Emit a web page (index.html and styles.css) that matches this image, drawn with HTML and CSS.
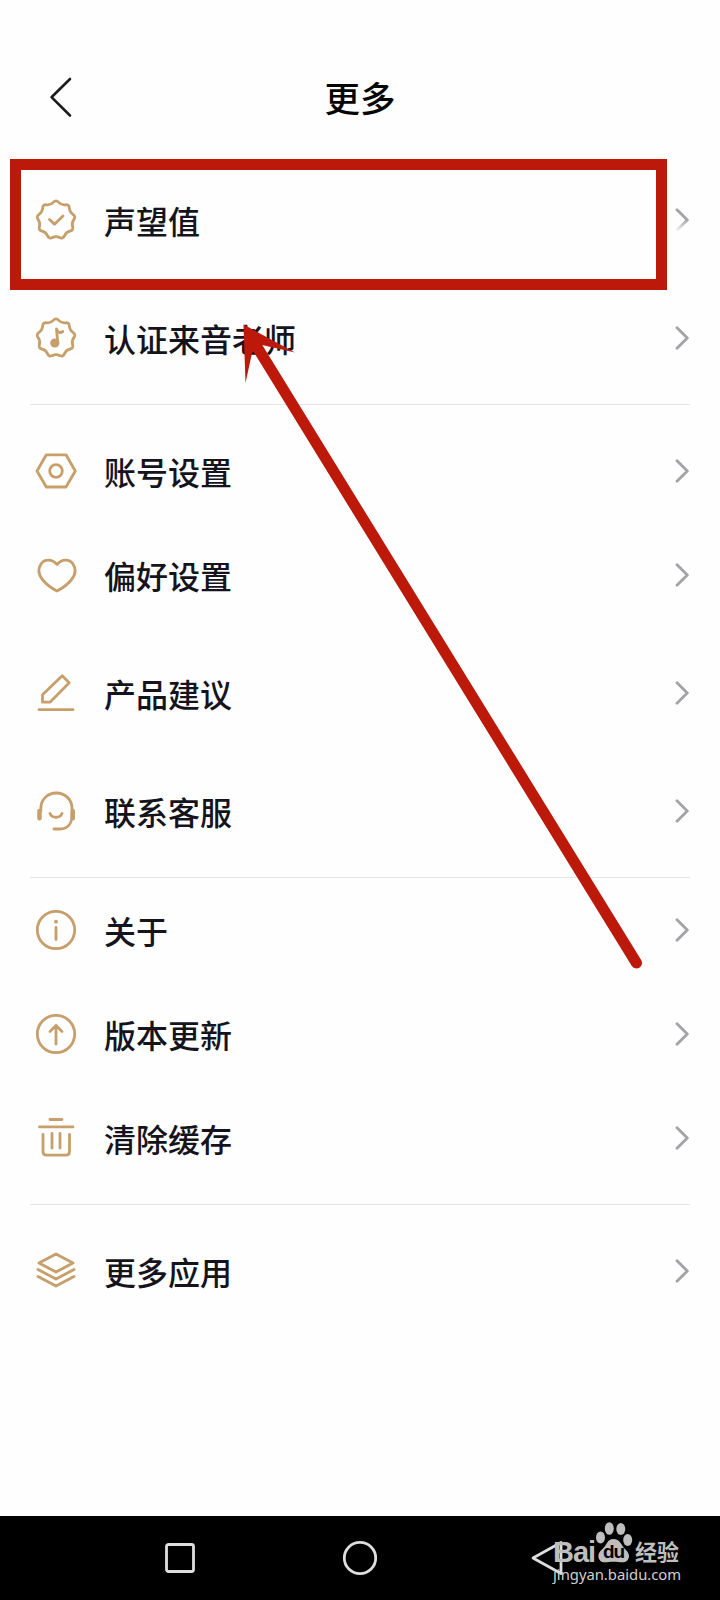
FILE: index.html
```html
<!DOCTYPE html>
<html lang="zh-CN">
<head>
<meta charset="utf-8">
<title>更多</title>
<link rel="stylesheet" href="styles.css">
</head>
<body>
<svg class="defs" width="0" height="0">
  <symbol id="badge" viewBox="0 0 44 44"><path d="M24.690 4.380Q27.370 7.250 31.280 6.780Q35.180 6.300 35.390 10.230Q35.600 14.150 38.900 16.300Q42.190 18.440 39.830 21.590Q37.460 24.730 38.610 28.490Q39.750 32.250 35.920 33.140Q32.090 34.030 30.550 37.650Q29.010 41.260 25.510 39.480Q22 37.700 18.490 39.480Q14.990 41.260 13.450 37.650Q11.910 34.030 8.080 33.140Q4.250 32.250 5.390 28.490Q6.540 24.730 4.170 21.590Q1.810 18.440 5.100 16.300Q8.400 14.150 8.610 10.230Q8.820 6.300 12.720 6.780Q16.630 7.250 19.310 4.380Q22 1.500 24.690 4.380Z"/></symbol>
  <symbol id="next" viewBox="0 0 14 24"><path d="M2 1.700L12.300 12L2 22.300"/></symbol>
</svg>
<div class="screen">
  <header class="header">
    <svg class="back" viewBox="0 0 24 42"><path d="M22 3L3.500 21.200L22 39.500"/></svg>
    <h1 class="title">更多</h1>
  </header>

  <main class="menu">
    <section class="group spaced">
      <div class="row"><svg class="icon" viewBox="0 0 44 44"><use href="#badge"/><path d="M15.500 21.500L20.500 26.300L29 18"/></svg><span class="label">声望值</span><svg class="next faded"><use href="#next"/></svg></div>
      <div class="row"><svg class="icon" viewBox="0 0 44 44"><use href="#badge"/><circle class="solid" cx="20.800" cy="27" r="4.600"/><path d="M23.800 27L22.500 13C23.500 16.500 26 17.500 28.800 15.500"/></svg><span class="label">认证来音老师</span><svg class="next"><use href="#next"/></svg></div>
    </section>
    <section class="group settings">
      <div class="row"><svg class="icon" viewBox="0 0 44 44"><path d="M12.300 5.800H32L41.300 22L32 38H12.300L3 22Z"/><circle cx="22" cy="22" r="6.300"/></svg><span class="label">账号设置</span><svg class="next"><use href="#next"/></svg></div>
      <div class="row"><svg class="icon" viewBox="0 0 44 44"><path d="M23 11.500C18 5.700 10.500 5.800 7 11C3.500 16.500 5 22.500 8.800 27C12.500 31.500 18 35.500 23 38C28 35.500 33.500 31.500 37.200 27C41 22.500 42.500 16.500 39 11C35.500 5.800 28 5.700 23 11.500Z"/></svg><span class="label">偏好设置</span><svg class="next"><use href="#next"/></svg></div>
      <div class="row gap"><svg class="icon" viewBox="0 0 44 44"><path d="M28.200 4.800L35.200 11.800L16 31.200H8.500V23.800ZM5 38.700H39"/></svg><span class="label">产品建议</span><svg class="next"><use href="#next"/></svg></div>
      <div class="row gap"><svg class="icon" viewBox="0 0 44 44"><path d="M6.800 22V19.500C6.800 10.500 13.500 4 22.300 4S38 10.500 38 19.500V26C38 34 34 40 26 40H20M16 24.500C18 29.500 26 29.500 28 24.500"/><path class="pads" d="M5.500 22V29.300M38.800 22V29.300"/></svg><span class="label">联系客服</span><svg class="next"><use href="#next"/></svg></div>
    </section>
    <section class="group">
      <div class="row"><svg class="icon" viewBox="0 0 44 44"><circle cx="22" cy="22" r="18.700"/><path d="M22 19.500V31.500"/><circle class="solid" cx="22" cy="13.700" r="1.900"/></svg><span class="label">关于</span><svg class="next"><use href="#next"/></svg></div>
      <div class="row"><svg class="icon" viewBox="0 0 44 44"><circle cx="22" cy="22" r="18.700"/><path d="M22 32V13.500M16 19.500L22 13.500L28 19.500"/></svg><span class="label">版本更新</span><svg class="next"><use href="#next"/></svg></div>
      <div class="row"><svg class="icon" viewBox="0 0 44 44"><path d="M16 3.500H28M5.500 10.900H39M9 18.500V35.500C9 38 10.500 39.200 12.500 39.200H32C34 39.200 35.500 38 35.500 35.500V18.500M18 17.500V32M26 17.500V32"/></svg><span class="label">清除缓存</span><svg class="next"><use href="#next"/></svg></div>
    </section>
    <section class="group apps">
      <div class="row"><svg class="icon" viewBox="0 0 44 44"><path d="M22 5L39 14L22 23L5 14ZM4 20.500L22 30L40 20.500M4 27.500L22 37L40 27.500"/></svg><span class="label">更多应用</span><svg class="next"><use href="#next"/></svg></div>
    </section>
  </main>

  <nav class="navbar">
    <svg viewBox="0 0 36 36"><rect x="4.500" y="4.500" width="27" height="27" rx="2"/></svg>
    <svg viewBox="0 0 36 36"><circle cx="18" cy="18" r="15.700"/></svg>
    <svg viewBox="0 0 36 36"><path d="M31 2.500V33.500L3 18Z"/></svg>
  </nav>

  <div class="watermark">
    <div class="brand">
      <span class="bai">Bai</span>
      <span class="paw"><svg viewBox="0 0 38 42"><ellipse cx="5.500" cy="15.500" rx="4.500" ry="6"/><ellipse cx="14.300" cy="6.500" rx="4.500" ry="6.300"/><ellipse cx="25.800" cy="7" rx="4.500" ry="6"/><ellipse cx="32.700" cy="18" rx="4.500" ry="6"/><path d="M18.500 17C25 17 26 23 30 27C34 31 35 34 33 37.500C31 41 27 40.500 23 40C20 39.600 17 39.600 14 40C10 40.500 6 41 4 37C2.500 33 4 30 8 26.500C12 23 12 17 18.500 17Z"/></svg><span class="du">du</span></span>
      <span class="jingyan">经验</span>
    </div>
    <div class="site">jingyan.baidu.com</div>
  </div>

  <div class="highlight"></div>
  <svg class="arrow" viewBox="0 0 720 1600"><path class="shaft" d="M257 347L636.500 963"/><path class="head" d="M243.500 324.500L295 352.500L262 345L252 353L245.500 383Z"/></svg>
</div>
</body>
</html>
```
FILE: styles.css
```css
body {
  margin: 0;
  background: #fefefe;
  font-family: "Noto Sans CJK SC", sans-serif;
}
.defs { position: absolute; }
.screen {
  position: relative;
  width: 720px;
  height: 1600px;
  display: flex;
  flex-direction: column;
  overflow: hidden;
}
.header {
  height: 168px;
  box-sizing: border-box;
  padding: 26px 48px 0;
  display: grid;
  grid-template-columns: 24px 1fr 24px;
  align-items: center;
}
.back {
  width: 24px;
  height: 42px;
  fill: none;
  stroke: #1c1b20;
  stroke-width: 2.6;
  stroke-linecap: round;
  stroke-linejoin: round;
}
.title {
  margin: 0;
  text-align: center;
  font-size: 35.5px;
  line-height: 50px;
  font-weight: 500;
  color: #050505;
}
.menu { flex: 1; padding: 0 30px; }
.group { border-bottom: 1px solid #e4e4e4; padding-bottom: 14px; }
.spaced { display: flex; flex-direction: column; gap: 14px; }
.settings { padding-top: 14px; }
.apps { padding-top: 14px; border: 0; }
.row {
  height: 104px;
  display: flex;
  align-items: center;
  padding-left: 4px;
}
.gap { margin-top: 14px; }
.icon {
  width: 44px;
  height: 44px;
  fill: none;
  stroke: #c69f6b;
  stroke-width: 2.8;
  stroke-linecap: round;
  stroke-linejoin: round;
}
.icon .solid { fill: #c69f6b; stroke: none; }
.icon .pads { stroke-width: 4.5; }
.label {
  flex: 1;
  margin-left: 26px;
  padding-bottom: 1px;
  font-size: 32px;
  line-height: 44px;
  font-weight: 500;
  color: #15131c;
}
.next {
  width: 14px;
  height: 24px;
  margin-right: 1px;
  fill: none;
  stroke: #a3a3a6;
  stroke-width: 2.8;
  stroke-linecap: round;
  stroke-linejoin: round;
}
.faded {
  -webkit-mask-image: linear-gradient(#000 50%, transparent);
  mask-image: linear-gradient(#000 50%, transparent);
}
.navbar {
  height: 84px;
  background: #000;
  display: flex;
  justify-content: center;
  align-items: center;
  gap: 144px;
}
.navbar svg {
  width: 36px;
  height: 36px;
  fill: none;
  stroke: #dedede;
  stroke-width: 2.8;
  stroke-linejoin: round;
}
.navbar svg:last-child { margin: 0 -8px 0 8px; }
.watermark {
  position: absolute;
  left: 553px;
  top: 1522px;
  color: #bebebe;
  font-family: "Liberation Sans", "Noto Sans CJK SC", sans-serif;
}
.brand { display: flex; height: 44px; align-items: flex-end; }
.bai { width: 42px; font-size: 29px; line-height: 28px; font-weight: 700; letter-spacing: -1px; }
.paw { position: relative; width: 38px; height: 42px; margin-bottom: 2px; }
.paw svg { width: 38px; height: 42px; fill: #bebebe; }
.du {
  position: absolute;
  left: 8px;
  top: 19px;
  font-size: 19px;
  line-height: 22px;
  font-weight: 700;
  letter-spacing: -1px;
  color: #000;
}
.jingyan { margin-left: 2px; font: 700 22px/32px "Noto Sans CJK SC", sans-serif; }
.site { margin-top: -1px; font: 14.8px/18px "Noto Sans", sans-serif; color: #d0d0d0; }
.highlight {
  position: absolute;
  left: 10px;
  top: 159px;
  width: 635px;
  height: 109px;
  border: 11px solid #bd190b;
}
.arrow { position: absolute; inset: 0; width: 720px; height: 1600px; }
.shaft { stroke: #bd190b; stroke-width: 11; stroke-linecap: round; }
.head { fill: #bd190b; }
```
